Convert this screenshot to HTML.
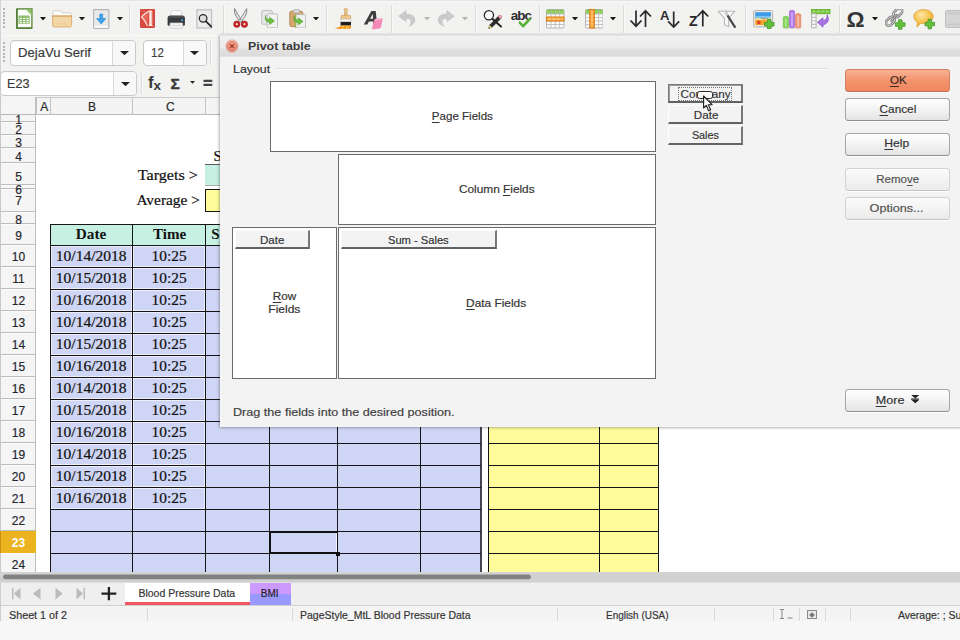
<!DOCTYPE html><html><head><meta charset="utf-8"><title>Pivot table</title><style>
*{box-sizing:border-box;margin:0;padding:0}
html,body{width:960px;height:640px;overflow:hidden;background:#f2f2f1;font-family:"Liberation Sans",sans-serif;color:#333}
.abs{position:absolute}
#root{position:relative;width:960px;height:640px;overflow:hidden;background:#f2f2f1}
.hl{position:absolute;background:#151515;height:1px}
.vl{position:absolute;background:#151515;width:1px}
.btn{position:absolute;border:1px solid #a6a6a6;border-bottom-color:#8f8f8f;border-radius:3.500px;background:linear-gradient(#ffffff,#f4f4f4 45%,#e4e4e4);box-shadow:0 1px 0 rgba(255,255,255,.9)}
.fld{position:absolute;background:#f3f3f3;border-top:1px solid #fdfdfd;border-left:1px solid #fdfdfd;border-right:2px solid #777;border-bottom:2px solid #626262}
.box{position:absolute;background:#fff;border:1px solid #6a6a6a}
u{text-decoration:underline;text-underline-offset:1.500px;text-decoration-thickness:1px}
</style></head><body><div id="root">
<div class="abs" style="left:0;top:97px;width:960px;height:476px;background:#fff"></div>
<div class="abs" style="left:0;top:97px;width:960px;height:18px;background:#f4f4f4;border-top:1px solid #cacaca;border-bottom:1px solid #b9b9b9"></div>
<div class="abs" style="left:0;top:97px;width:36px;height:476px;background:#f5f5f5;border-right:1px solid #bdbdbd"></div>
<div class="abs" style="left:0;top:97px;width:1px;height:476px;background:#c8c8c8"></div>
<div class="abs" style="left:1px;top:114px;width:35px;height:1px;background:#b9b9b9"></div>
<div class="abs" style="left:40.20px;top:98.80px;height:16px;line-height:16px;font-size:12px;color:#2a2a2a;white-space:nowrap;transform-origin:50% 50%;-webkit-text-stroke:0.18px #2a2a2a;">A</div>
<div class="abs" style="left:88.00px;top:98.80px;height:16px;line-height:16px;font-size:12px;color:#2a2a2a;white-space:nowrap;transform-origin:50% 50%;-webkit-text-stroke:0.18px #2a2a2a;">B</div>
<div class="abs" style="left:165.97px;top:98.80px;height:16px;line-height:16px;font-size:12px;color:#2a2a2a;white-space:nowrap;transform-origin:50% 50%;-webkit-text-stroke:0.18px #2a2a2a;">C</div>
<div class="abs" style="left:36px;top:98px;width:1px;height:17px;background:#c2c2c2"></div>
<div class="abs" style="left:50px;top:98px;width:1px;height:17px;background:#c2c2c2"></div>
<div class="abs" style="left:132px;top:98px;width:1px;height:17px;background:#c2c2c2"></div>
<div class="abs" style="left:205px;top:98px;width:1px;height:17px;background:#c2c2c2"></div>
<div class="abs" style="left:1px;top:121px;width:35px;height:1px;background:#bcbcbc"></div><div class="abs" style="left:1px;top:122px;width:34px;height:1px;background:#fbfbfb"></div>
<div class="abs" style="left:1px;top:134px;width:35px;height:1px;background:#bcbcbc"></div><div class="abs" style="left:1px;top:135px;width:34px;height:1px;background:#fbfbfb"></div>
<div class="abs" style="left:1px;top:147px;width:35px;height:1px;background:#bcbcbc"></div><div class="abs" style="left:1px;top:148px;width:34px;height:1px;background:#fbfbfb"></div>
<div class="abs" style="left:1px;top:162px;width:35px;height:1px;background:#bcbcbc"></div><div class="abs" style="left:1px;top:163px;width:34px;height:1px;background:#fbfbfb"></div>
<div class="abs" style="left:1px;top:184px;width:35px;height:1px;background:#bcbcbc"></div><div class="abs" style="left:1px;top:185px;width:34px;height:1px;background:#fbfbfb"></div>
<div class="abs" style="left:1px;top:188px;width:35px;height:1px;background:#bcbcbc"></div><div class="abs" style="left:1px;top:189px;width:34px;height:1px;background:#fbfbfb"></div>
<div class="abs" style="left:1px;top:211px;width:35px;height:1px;background:#bcbcbc"></div><div class="abs" style="left:1px;top:212px;width:34px;height:1px;background:#fbfbfb"></div>
<div class="abs" style="left:1px;top:223px;width:35px;height:1px;background:#bcbcbc"></div><div class="abs" style="left:1px;top:224px;width:34px;height:1px;background:#fbfbfb"></div>
<div class="abs" style="left:1px;top:244px;width:35px;height:1px;background:#bcbcbc"></div><div class="abs" style="left:1px;top:245px;width:34px;height:1px;background:#fbfbfb"></div>
<div class="abs" style="left:1px;top:266px;width:35px;height:1px;background:#bcbcbc"></div><div class="abs" style="left:1px;top:267px;width:34px;height:1px;background:#fbfbfb"></div>
<div class="abs" style="left:1px;top:288px;width:35px;height:1px;background:#bcbcbc"></div><div class="abs" style="left:1px;top:289px;width:34px;height:1px;background:#fbfbfb"></div>
<div class="abs" style="left:1px;top:310px;width:35px;height:1px;background:#bcbcbc"></div><div class="abs" style="left:1px;top:311px;width:34px;height:1px;background:#fbfbfb"></div>
<div class="abs" style="left:1px;top:332px;width:35px;height:1px;background:#bcbcbc"></div><div class="abs" style="left:1px;top:333px;width:34px;height:1px;background:#fbfbfb"></div>
<div class="abs" style="left:1px;top:354px;width:35px;height:1px;background:#bcbcbc"></div><div class="abs" style="left:1px;top:355px;width:34px;height:1px;background:#fbfbfb"></div>
<div class="abs" style="left:1px;top:376px;width:35px;height:1px;background:#bcbcbc"></div><div class="abs" style="left:1px;top:377px;width:34px;height:1px;background:#fbfbfb"></div>
<div class="abs" style="left:1px;top:398px;width:35px;height:1px;background:#bcbcbc"></div><div class="abs" style="left:1px;top:399px;width:34px;height:1px;background:#fbfbfb"></div>
<div class="abs" style="left:1px;top:420px;width:35px;height:1px;background:#bcbcbc"></div><div class="abs" style="left:1px;top:421px;width:34px;height:1px;background:#fbfbfb"></div>
<div class="abs" style="left:1px;top:442px;width:35px;height:1px;background:#bcbcbc"></div><div class="abs" style="left:1px;top:443px;width:34px;height:1px;background:#fbfbfb"></div>
<div class="abs" style="left:1px;top:464px;width:35px;height:1px;background:#bcbcbc"></div><div class="abs" style="left:1px;top:465px;width:34px;height:1px;background:#fbfbfb"></div>
<div class="abs" style="left:1px;top:486px;width:35px;height:1px;background:#bcbcbc"></div><div class="abs" style="left:1px;top:487px;width:34px;height:1px;background:#fbfbfb"></div>
<div class="abs" style="left:1px;top:508px;width:35px;height:1px;background:#bcbcbc"></div><div class="abs" style="left:1px;top:509px;width:34px;height:1px;background:#fbfbfb"></div>
<div class="abs" style="left:1px;top:530px;width:35px;height:1px;background:#bcbcbc"></div><div class="abs" style="left:1px;top:531px;width:34px;height:1px;background:#fbfbfb"></div>
<div class="abs" style="left:1px;top:552px;width:35px;height:1px;background:#bcbcbc"></div><div class="abs" style="left:1px;top:553px;width:34px;height:1px;background:#fbfbfb"></div>
<div class="abs" style="left:1px;top:575px;width:35px;height:1px;background:#bcbcbc"></div><div class="abs" style="left:1px;top:576px;width:34px;height:1px;background:#fbfbfb"></div>
<div class="abs" style="left:15.16px;top:112.00px;height:16px;line-height:16px;font-size:12px;color:#25252f;white-space:nowrap;transform-origin:50% 50%;-webkit-text-stroke:0.18px #25252f;">1</div>
<div class="abs" style="left:15.16px;top:122.00px;height:16px;line-height:16px;font-size:12px;color:#25252f;white-space:nowrap;transform-origin:50% 50%;-webkit-text-stroke:0.18px #25252f;">2</div>
<div class="abs" style="left:15.16px;top:135.00px;height:16px;line-height:16px;font-size:12px;color:#25252f;white-space:nowrap;transform-origin:50% 50%;-webkit-text-stroke:0.18px #25252f;">3</div>
<div class="abs" style="left:15.16px;top:148.50px;height:16px;line-height:16px;font-size:12px;color:#25252f;white-space:nowrap;transform-origin:50% 50%;-webkit-text-stroke:0.18px #25252f;">4</div>
<div class="abs" style="left:15.16px;top:168.50px;height:16px;line-height:16px;font-size:12px;color:#25252f;white-space:nowrap;transform-origin:50% 50%;-webkit-text-stroke:0.18px #25252f;">5</div>
<div class="abs" style="left:15.16px;top:182.00px;height:16px;line-height:16px;font-size:12px;color:#25252f;white-space:nowrap;transform-origin:50% 50%;-webkit-text-stroke:0.18px #25252f;">6</div>
<div class="abs" style="left:15.16px;top:193.00px;height:16px;line-height:16px;font-size:12px;color:#25252f;white-space:nowrap;transform-origin:50% 50%;-webkit-text-stroke:0.18px #25252f;">7</div>
<div class="abs" style="left:15.16px;top:211.50px;height:16px;line-height:16px;font-size:12px;color:#25252f;white-space:nowrap;transform-origin:50% 50%;-webkit-text-stroke:0.18px #25252f;">8</div>
<div class="abs" style="left:15.16px;top:227.50px;height:16px;line-height:16px;font-size:12px;color:#25252f;white-space:nowrap;transform-origin:50% 50%;-webkit-text-stroke:0.18px #25252f;">9</div>
<div class="abs" style="left:11.83px;top:249.30px;height:16px;line-height:16px;font-size:12px;color:#25252f;white-space:nowrap;transform-origin:50% 50%;-webkit-text-stroke:0.18px #25252f;">10</div>
<div class="abs" style="left:12.27px;top:271.30px;height:16px;line-height:16px;font-size:12px;color:#25252f;white-space:nowrap;transform-origin:50% 50%;-webkit-text-stroke:0.18px #25252f;">11</div>
<div class="abs" style="left:11.83px;top:293.30px;height:16px;line-height:16px;font-size:12px;color:#25252f;white-space:nowrap;transform-origin:50% 50%;-webkit-text-stroke:0.18px #25252f;">12</div>
<div class="abs" style="left:11.83px;top:315.30px;height:16px;line-height:16px;font-size:12px;color:#25252f;white-space:nowrap;transform-origin:50% 50%;-webkit-text-stroke:0.18px #25252f;">13</div>
<div class="abs" style="left:11.83px;top:337.30px;height:16px;line-height:16px;font-size:12px;color:#25252f;white-space:nowrap;transform-origin:50% 50%;-webkit-text-stroke:0.18px #25252f;">14</div>
<div class="abs" style="left:11.83px;top:359.30px;height:16px;line-height:16px;font-size:12px;color:#25252f;white-space:nowrap;transform-origin:50% 50%;-webkit-text-stroke:0.18px #25252f;">15</div>
<div class="abs" style="left:11.83px;top:381.30px;height:16px;line-height:16px;font-size:12px;color:#25252f;white-space:nowrap;transform-origin:50% 50%;-webkit-text-stroke:0.18px #25252f;">16</div>
<div class="abs" style="left:11.83px;top:403.30px;height:16px;line-height:16px;font-size:12px;color:#25252f;white-space:nowrap;transform-origin:50% 50%;-webkit-text-stroke:0.18px #25252f;">17</div>
<div class="abs" style="left:11.83px;top:425.30px;height:16px;line-height:16px;font-size:12px;color:#25252f;white-space:nowrap;transform-origin:50% 50%;-webkit-text-stroke:0.18px #25252f;">18</div>
<div class="abs" style="left:11.83px;top:447.30px;height:16px;line-height:16px;font-size:12px;color:#25252f;white-space:nowrap;transform-origin:50% 50%;-webkit-text-stroke:0.18px #25252f;">19</div>
<div class="abs" style="left:11.83px;top:469.30px;height:16px;line-height:16px;font-size:12px;color:#25252f;white-space:nowrap;transform-origin:50% 50%;-webkit-text-stroke:0.18px #25252f;">20</div>
<div class="abs" style="left:11.83px;top:491.30px;height:16px;line-height:16px;font-size:12px;color:#25252f;white-space:nowrap;transform-origin:50% 50%;-webkit-text-stroke:0.18px #25252f;">21</div>
<div class="abs" style="left:11.83px;top:513.30px;height:16px;line-height:16px;font-size:12px;color:#25252f;white-space:nowrap;transform-origin:50% 50%;-webkit-text-stroke:0.18px #25252f;">22</div>
<div class="abs" style="left:0;top:531px;width:36px;height:22px;background:#eab31f;border-left:1px solid #c99212"></div>
<div class="abs" style="left:11.83px;top:535.30px;height:16px;line-height:16px;font-size:12px;color:#fff;white-space:nowrap;transform-origin:50% 50%;font-weight:bold;">23</div>
<div class="abs" style="left:11.83px;top:557.30px;height:16px;line-height:16px;font-size:12px;color:#25252f;white-space:nowrap;transform-origin:50% 50%;-webkit-text-stroke:0.18px #25252f;">24</div>
<div class="abs" style="left:50px;top:245px;width:431px;height:328px;background:#cfd5f4"></div>
<div class="abs" style="left:50px;top:224px;width:431px;height:21px;background:#c6f0e1"></div>
<div class="abs" style="left:488px;top:245px;width:170px;height:328px;background:#fffd9b"></div>
<div class="abs" style="left:205px;top:164px;width:30px;height:22px;background:#c6f0e1;border-top:1px solid #5a5a5a;border-bottom:1px solid #b0b0b0"></div>
<div class="abs" style="left:205px;top:189px;width:30px;height:23px;background:#fffd9b;border:1px solid #151515"></div>
<div class="abs" style="left:213.50px;top:145.50px;height:20px;line-height:20px;font-size:15px;color:#111;white-space:nowrap;transform-origin:0 50%;font-family:'Liberation Serif',serif;-webkit-text-stroke:0.22px #111;">S</div>
<div class="abs" style="left:142.33px;top:165.00px;height:20px;line-height:20px;font-size:15px;color:#111;white-space:nowrap;transform-origin:100% 50%;transform:scaleX(1.0739);font-family:'Liberation Serif',serif;-webkit-text-stroke:0.22px #111;">Targets &gt;</div>
<div class="abs" style="left:138.10px;top:190.00px;height:20px;line-height:20px;font-size:15px;color:#111;white-space:nowrap;transform-origin:100% 50%;transform:scaleX(1.0259);font-family:'Liberation Serif',serif;-webkit-text-stroke:0.22px #111;">Average &gt;</div>
<div class="abs" style="left:51px;top:246px;width:81px;height:21px;border:1px solid rgba(255,255,255,.6)"></div>
<div class="abs" style="left:133px;top:246px;width:72px;height:21px;border:1px solid rgba(255,255,255,.6)"></div>
<div class="abs" style="left:51px;top:268px;width:81px;height:21px;border:1px solid rgba(255,255,255,.6)"></div>
<div class="abs" style="left:133px;top:268px;width:72px;height:21px;border:1px solid rgba(255,255,255,.6)"></div>
<div class="abs" style="left:51px;top:290px;width:81px;height:21px;border:1px solid rgba(255,255,255,.6)"></div>
<div class="abs" style="left:133px;top:290px;width:72px;height:21px;border:1px solid rgba(255,255,255,.6)"></div>
<div class="abs" style="left:51px;top:312px;width:81px;height:21px;border:1px solid rgba(255,255,255,.6)"></div>
<div class="abs" style="left:133px;top:312px;width:72px;height:21px;border:1px solid rgba(255,255,255,.6)"></div>
<div class="abs" style="left:51px;top:334px;width:81px;height:21px;border:1px solid rgba(255,255,255,.6)"></div>
<div class="abs" style="left:133px;top:334px;width:72px;height:21px;border:1px solid rgba(255,255,255,.6)"></div>
<div class="abs" style="left:51px;top:356px;width:81px;height:21px;border:1px solid rgba(255,255,255,.6)"></div>
<div class="abs" style="left:133px;top:356px;width:72px;height:21px;border:1px solid rgba(255,255,255,.6)"></div>
<div class="abs" style="left:51px;top:378px;width:81px;height:21px;border:1px solid rgba(255,255,255,.6)"></div>
<div class="abs" style="left:133px;top:378px;width:72px;height:21px;border:1px solid rgba(255,255,255,.6)"></div>
<div class="abs" style="left:51px;top:400px;width:81px;height:21px;border:1px solid rgba(255,255,255,.6)"></div>
<div class="abs" style="left:133px;top:400px;width:72px;height:21px;border:1px solid rgba(255,255,255,.6)"></div>
<div class="abs" style="left:51px;top:422px;width:81px;height:21px;border:1px solid rgba(255,255,255,.6)"></div>
<div class="abs" style="left:133px;top:422px;width:72px;height:21px;border:1px solid rgba(255,255,255,.6)"></div>
<div class="abs" style="left:51px;top:444px;width:81px;height:21px;border:1px solid rgba(255,255,255,.6)"></div>
<div class="abs" style="left:133px;top:444px;width:72px;height:21px;border:1px solid rgba(255,255,255,.6)"></div>
<div class="abs" style="left:51px;top:466px;width:81px;height:21px;border:1px solid rgba(255,255,255,.6)"></div>
<div class="abs" style="left:133px;top:466px;width:72px;height:21px;border:1px solid rgba(255,255,255,.6)"></div>
<div class="abs" style="left:51px;top:488px;width:81px;height:21px;border:1px solid rgba(255,255,255,.6)"></div>
<div class="abs" style="left:133px;top:488px;width:72px;height:21px;border:1px solid rgba(255,255,255,.6)"></div>
<div class="abs" style="left:480px;top:224px;width:2px;height:349px;background:#444450"></div>
<div class="vl" style="left:50px;top:224px;height:349px"></div>
<div class="vl" style="left:132px;top:224px;height:349px"></div>
<div class="vl" style="left:205px;top:224px;height:349px"></div>
<div class="vl" style="left:269px;top:224px;height:349px"></div>
<div class="vl" style="left:337px;top:224px;height:349px"></div>
<div class="vl" style="left:420px;top:224px;height:349px"></div>
<div class="vl" style="left:488px;top:245px;height:328px"></div>
<div class="vl" style="left:599px;top:245px;height:328px"></div>
<div class="vl" style="left:658px;top:245px;height:328px"></div>
<div class="hl" style="left:50px;top:224px;width:431px"></div>
<div class="hl" style="left:50px;top:245px;width:431px"></div>
<div class="hl" style="left:488px;top:245px;width:171px"></div>
<div class="hl" style="left:50px;top:267px;width:431px"></div>
<div class="hl" style="left:488px;top:267px;width:171px"></div>
<div class="hl" style="left:50px;top:289px;width:431px"></div>
<div class="hl" style="left:488px;top:289px;width:171px"></div>
<div class="hl" style="left:50px;top:311px;width:431px"></div>
<div class="hl" style="left:488px;top:311px;width:171px"></div>
<div class="hl" style="left:50px;top:333px;width:431px"></div>
<div class="hl" style="left:488px;top:333px;width:171px"></div>
<div class="hl" style="left:50px;top:355px;width:431px"></div>
<div class="hl" style="left:488px;top:355px;width:171px"></div>
<div class="hl" style="left:50px;top:377px;width:431px"></div>
<div class="hl" style="left:488px;top:377px;width:171px"></div>
<div class="hl" style="left:50px;top:399px;width:431px"></div>
<div class="hl" style="left:488px;top:399px;width:171px"></div>
<div class="hl" style="left:50px;top:421px;width:431px"></div>
<div class="hl" style="left:488px;top:421px;width:171px"></div>
<div class="hl" style="left:50px;top:443px;width:431px"></div>
<div class="hl" style="left:488px;top:443px;width:171px"></div>
<div class="hl" style="left:50px;top:465px;width:431px"></div>
<div class="hl" style="left:488px;top:465px;width:171px"></div>
<div class="hl" style="left:50px;top:487px;width:431px"></div>
<div class="hl" style="left:488px;top:487px;width:171px"></div>
<div class="hl" style="left:50px;top:509px;width:431px"></div>
<div class="hl" style="left:488px;top:509px;width:171px"></div>
<div class="hl" style="left:50px;top:531px;width:431px"></div>
<div class="hl" style="left:488px;top:531px;width:171px"></div>
<div class="hl" style="left:50px;top:553px;width:431px"></div>
<div class="hl" style="left:488px;top:553px;width:171px"></div>
<div class="abs" style="left:76.01px;top:224.20px;height:20px;line-height:20px;font-size:15px;color:#111;white-space:nowrap;transform-origin:50% 50%;transform:scaleX(1.0172);font-family:'Liberation Serif',serif;font-weight:bold;">Date</div>
<div class="abs" style="left:152.97px;top:224.20px;height:20px;line-height:20px;font-size:15px;color:#111;white-space:nowrap;transform-origin:50% 50%;transform:scaleX(1.0044);font-family:'Liberation Serif',serif;font-weight:bold;">Time</div>
<div class="abs" style="left:211.30px;top:224.20px;height:20px;line-height:20px;font-size:15px;color:#111;white-space:nowrap;transform-origin:0 50%;font-family:'Liberation Serif',serif;font-weight:bold;">S</div>
<div class="abs" style="left:56.83px;top:246.10px;height:20px;line-height:20px;font-size:15px;color:#111;white-space:nowrap;transform-origin:50% 50%;transform:scaleX(1.0346);font-family:'Liberation Serif',serif;-webkit-text-stroke:0.22px #111;">10/14/2018</div>
<div class="abs" style="left:152.42px;top:246.10px;height:20px;line-height:20px;font-size:15px;color:#111;white-space:nowrap;transform-origin:50% 50%;transform:scaleX(1.0244);font-family:'Liberation Serif',serif;-webkit-text-stroke:0.22px #111;">10:25</div>
<div class="abs" style="left:56.83px;top:268.10px;height:20px;line-height:20px;font-size:15px;color:#111;white-space:nowrap;transform-origin:50% 50%;transform:scaleX(1.0346);font-family:'Liberation Serif',serif;-webkit-text-stroke:0.22px #111;">10/15/2018</div>
<div class="abs" style="left:152.42px;top:268.10px;height:20px;line-height:20px;font-size:15px;color:#111;white-space:nowrap;transform-origin:50% 50%;transform:scaleX(1.0244);font-family:'Liberation Serif',serif;-webkit-text-stroke:0.22px #111;">10:25</div>
<div class="abs" style="left:56.83px;top:290.10px;height:20px;line-height:20px;font-size:15px;color:#111;white-space:nowrap;transform-origin:50% 50%;transform:scaleX(1.0346);font-family:'Liberation Serif',serif;-webkit-text-stroke:0.22px #111;">10/16/2018</div>
<div class="abs" style="left:152.42px;top:290.10px;height:20px;line-height:20px;font-size:15px;color:#111;white-space:nowrap;transform-origin:50% 50%;transform:scaleX(1.0244);font-family:'Liberation Serif',serif;-webkit-text-stroke:0.22px #111;">10:25</div>
<div class="abs" style="left:56.83px;top:312.10px;height:20px;line-height:20px;font-size:15px;color:#111;white-space:nowrap;transform-origin:50% 50%;transform:scaleX(1.0346);font-family:'Liberation Serif',serif;-webkit-text-stroke:0.22px #111;">10/14/2018</div>
<div class="abs" style="left:152.42px;top:312.10px;height:20px;line-height:20px;font-size:15px;color:#111;white-space:nowrap;transform-origin:50% 50%;transform:scaleX(1.0244);font-family:'Liberation Serif',serif;-webkit-text-stroke:0.22px #111;">10:25</div>
<div class="abs" style="left:56.83px;top:334.10px;height:20px;line-height:20px;font-size:15px;color:#111;white-space:nowrap;transform-origin:50% 50%;transform:scaleX(1.0346);font-family:'Liberation Serif',serif;-webkit-text-stroke:0.22px #111;">10/15/2018</div>
<div class="abs" style="left:152.42px;top:334.10px;height:20px;line-height:20px;font-size:15px;color:#111;white-space:nowrap;transform-origin:50% 50%;transform:scaleX(1.0244);font-family:'Liberation Serif',serif;-webkit-text-stroke:0.22px #111;">10:25</div>
<div class="abs" style="left:56.83px;top:356.10px;height:20px;line-height:20px;font-size:15px;color:#111;white-space:nowrap;transform-origin:50% 50%;transform:scaleX(1.0346);font-family:'Liberation Serif',serif;-webkit-text-stroke:0.22px #111;">10/16/2018</div>
<div class="abs" style="left:152.42px;top:356.10px;height:20px;line-height:20px;font-size:15px;color:#111;white-space:nowrap;transform-origin:50% 50%;transform:scaleX(1.0244);font-family:'Liberation Serif',serif;-webkit-text-stroke:0.22px #111;">10:25</div>
<div class="abs" style="left:56.83px;top:378.10px;height:20px;line-height:20px;font-size:15px;color:#111;white-space:nowrap;transform-origin:50% 50%;transform:scaleX(1.0346);font-family:'Liberation Serif',serif;-webkit-text-stroke:0.22px #111;">10/14/2018</div>
<div class="abs" style="left:152.42px;top:378.10px;height:20px;line-height:20px;font-size:15px;color:#111;white-space:nowrap;transform-origin:50% 50%;transform:scaleX(1.0244);font-family:'Liberation Serif',serif;-webkit-text-stroke:0.22px #111;">10:25</div>
<div class="abs" style="left:56.83px;top:400.10px;height:20px;line-height:20px;font-size:15px;color:#111;white-space:nowrap;transform-origin:50% 50%;transform:scaleX(1.0346);font-family:'Liberation Serif',serif;-webkit-text-stroke:0.22px #111;">10/15/2018</div>
<div class="abs" style="left:152.42px;top:400.10px;height:20px;line-height:20px;font-size:15px;color:#111;white-space:nowrap;transform-origin:50% 50%;transform:scaleX(1.0244);font-family:'Liberation Serif',serif;-webkit-text-stroke:0.22px #111;">10:25</div>
<div class="abs" style="left:56.83px;top:422.10px;height:20px;line-height:20px;font-size:15px;color:#111;white-space:nowrap;transform-origin:50% 50%;transform:scaleX(1.0346);font-family:'Liberation Serif',serif;-webkit-text-stroke:0.22px #111;">10/16/2018</div>
<div class="abs" style="left:152.42px;top:422.10px;height:20px;line-height:20px;font-size:15px;color:#111;white-space:nowrap;transform-origin:50% 50%;transform:scaleX(1.0244);font-family:'Liberation Serif',serif;-webkit-text-stroke:0.22px #111;">10:25</div>
<div class="abs" style="left:56.83px;top:444.10px;height:20px;line-height:20px;font-size:15px;color:#111;white-space:nowrap;transform-origin:50% 50%;transform:scaleX(1.0346);font-family:'Liberation Serif',serif;-webkit-text-stroke:0.22px #111;">10/14/2018</div>
<div class="abs" style="left:152.42px;top:444.10px;height:20px;line-height:20px;font-size:15px;color:#111;white-space:nowrap;transform-origin:50% 50%;transform:scaleX(1.0244);font-family:'Liberation Serif',serif;-webkit-text-stroke:0.22px #111;">10:25</div>
<div class="abs" style="left:56.83px;top:466.10px;height:20px;line-height:20px;font-size:15px;color:#111;white-space:nowrap;transform-origin:50% 50%;transform:scaleX(1.0346);font-family:'Liberation Serif',serif;-webkit-text-stroke:0.22px #111;">10/15/2018</div>
<div class="abs" style="left:152.42px;top:466.10px;height:20px;line-height:20px;font-size:15px;color:#111;white-space:nowrap;transform-origin:50% 50%;transform:scaleX(1.0244);font-family:'Liberation Serif',serif;-webkit-text-stroke:0.22px #111;">10:25</div>
<div class="abs" style="left:56.83px;top:488.10px;height:20px;line-height:20px;font-size:15px;color:#111;white-space:nowrap;transform-origin:50% 50%;transform:scaleX(1.0346);font-family:'Liberation Serif',serif;-webkit-text-stroke:0.22px #111;">10/16/2018</div>
<div class="abs" style="left:152.42px;top:488.10px;height:20px;line-height:20px;font-size:15px;color:#111;white-space:nowrap;transform-origin:50% 50%;transform:scaleX(1.0244);font-family:'Liberation Serif',serif;-webkit-text-stroke:0.22px #111;">10:25</div>
<div class="abs" style="left:269px;top:531px;width:69px;height:23px;border:2px solid #111;border-right:1px solid #111;box-shadow:inset -1px 0 0 rgba(255,255,255,.85)"></div>
<div class="abs" style="left:335.500px;top:551.500px;width:4px;height:4px;background:#111"></div>
<div class="abs" style="left:0;top:572px;width:960px;height:11px;background:linear-gradient(#d3d3d3,#cfcfcf 85%,#e2e2e2)"></div>
<svg class="abs" style="left:0;top:572px" width="540" height="10" viewBox="0 0 540 10"><rect x="3" y="2.500" width="528" height="4.800" rx="2.400" fill="#828282"/></svg>
<div class="abs" style="left:0;top:583px;width:960px;height:22px;background:#efefef"></div>
<div class="abs" style="left:125px;top:583px;width:125px;height:22px;background:#fff;border-bottom:3px solid #f0565f"></div>
<div class="abs" style="left:136.87px;top:586.00px;height:14px;line-height:14px;font-size:10.8px;color:#333;white-space:nowrap;transform-origin:50% 50%;transform:scaleX(0.9704);-webkit-text-stroke:0.18px #333;">Blood Pressure Data</div>
<div class="abs" style="left:250px;top:583px;width:41px;height:22px;background:linear-gradient(#cc99ff 0,#cc99ff 50%,#9999ff 50%,#9999ff 100%)"></div>
<div class="abs" style="left:260.40px;top:585.80px;height:14px;line-height:14px;font-size:10.8px;color:#222;white-space:nowrap;transform-origin:50% 50%;transform:scaleX(0.9270);-webkit-text-stroke:0.18px #222;">BMI</div>
<svg class="abs" style="left:8px;top:584px" width="110" height="20" viewBox="0 0 110 20"><g fill="#bcbcbc"><rect x="4" y="3.800" width="1.500" height="11.600"/><path d="M12.500 3.800v11.600L5.800 9.600z"/><path d="M32.500 3.800v11.600L24.800 9.600z"/><path d="M47.500 3.800v11.600l7.200-5.800z"/><path d="M68.500 3.800v11.600l6.500-5.800z"/><rect x="75.500" y="3.800" width="1.500" height="11.600"/></g><path d="M100.900 2.900v13.400M93.500 9.600h14.800" stroke="#222" stroke-width="2.300" fill="none"/></svg>
<div class="abs" style="left:0;top:605px;width:960px;height:16px;background:#f4f4f4;border-top:1px solid #cfcfcf"></div>
<div class="abs" style="left:0;top:621px;width:960px;height:19px;background:#f7f7f7"></div><div class="abs" style="left:0;top:583px;width:1px;height:38px;background:#cfcfcf"></div>
<div class="abs" style="left:147px;top:608px;width:1px;height:13px;background:#dadada"></div>
<div class="abs" style="left:292px;top:608px;width:1px;height:13px;background:#dadada"></div>
<div class="abs" style="left:557px;top:608px;width:1px;height:13px;background:#dadada"></div>
<div class="abs" style="left:714px;top:608px;width:1px;height:13px;background:#dadada"></div>
<div class="abs" style="left:773px;top:608px;width:1px;height:13px;background:#dadada"></div>
<div class="abs" style="left:799px;top:608px;width:1px;height:13px;background:#dadada"></div>
<div class="abs" style="left:825px;top:608px;width:1px;height:13px;background:#dadada"></div>
<div class="abs" style="left:850px;top:608px;width:1px;height:13px;background:#dadada"></div>
<div class="abs" style="left:8.70px;top:608.00px;height:14px;line-height:14px;font-size:10.8px;color:#333;white-space:nowrap;transform-origin:0 50%;transform:scaleX(0.9958);-webkit-text-stroke:0.18px #333;">Sheet 1 of 2</div>
<div class="abs" style="left:299.70px;top:608.00px;height:14px;line-height:14px;font-size:10.8px;color:#333;white-space:nowrap;transform-origin:0 50%;transform:scaleX(0.9721);-webkit-text-stroke:0.18px #333;">PageStyle_MtL Blood Pressure Data</div>
<div class="abs" style="left:606.00px;top:608.00px;height:14px;line-height:14px;font-size:10.8px;color:#333;white-space:nowrap;transform-origin:0 50%;transform:scaleX(0.9215);-webkit-text-stroke:0.18px #333;">English (USA)</div>
<div class="abs" style="left:898.00px;top:608.00px;height:14px;line-height:14px;font-size:10.8px;color:#333;white-space:nowrap;transform-origin:0 50%;transform:scaleX(0.9698);-webkit-text-stroke:0.18px #333;">Average: ; Sum</div>
<svg class="abs" style="left:779px;top:609px" width="16" height="11" viewBox="0 0 16 11"><path d="M1 .5h4M3 .5v9M1 9.500h4M8.500 9h5" stroke="#888" stroke-width="1" fill="none"/></svg>
<div class="abs" style="left:807px;top:610px;width:10px;height:9px;border:1px solid #8a8a8a;background:#e9e9e9"></div>
<div class="abs" style="left:810px;top:612.500px;width:4px;height:4px;background:#777;transform:rotate(45deg)"></div>
<div class="abs" style="left:0;top:0;width:960px;height:97px;background:#f2f2f1"></div>
<div class="abs" style="left:0;top:0;width:960px;height:1px;background:#e4e4e4"></div>
<div class="abs" style="left:0;top:1px;width:960px;height:1px;background:#f8f8f8"></div>
<div class="abs" style="left:0;top:35px;width:960px;height:1px;background:#f9f9f9"></div>
<div class="abs" style="left:0;top:0;width:1px;height:97px;background:#d5d5d5"></div>
<div class="abs" style="left:3px;top:8.0px;width:2px;height:2px;background:#b4b4b4"></div>
<div class="abs" style="left:3px;top:11.6px;width:2px;height:2px;background:#b4b4b4"></div>
<div class="abs" style="left:3px;top:15.2px;width:2px;height:2px;background:#b4b4b4"></div>
<div class="abs" style="left:3px;top:18.8px;width:2px;height:2px;background:#b4b4b4"></div>
<div class="abs" style="left:3px;top:22.4px;width:2px;height:2px;background:#b4b4b4"></div>
<div class="abs" style="left:3px;top:26.0px;width:2px;height:2px;background:#b4b4b4"></div>
<div class="abs" style="left:3px;top:42.0px;width:2px;height:2px;background:#b4b4b4"></div>
<div class="abs" style="left:3px;top:45.6px;width:2px;height:2px;background:#b4b4b4"></div>
<div class="abs" style="left:3px;top:49.2px;width:2px;height:2px;background:#b4b4b4"></div>
<div class="abs" style="left:3px;top:52.8px;width:2px;height:2px;background:#b4b4b4"></div>
<div class="abs" style="left:3px;top:56.4px;width:2px;height:2px;background:#b4b4b4"></div>
<div class="abs" style="left:3px;top:60.0px;width:2px;height:2px;background:#b4b4b4"></div>
<div class="abs" style="left:129px;top:5px;width:1px;height:28px;background:#dcdcdc"></div>
<div class="abs" style="left:130px;top:5px;width:1px;height:28px;background:#fafafa"></div>
<div class="abs" style="left:223px;top:5px;width:1px;height:28px;background:#dcdcdc"></div>
<div class="abs" style="left:224px;top:5px;width:1px;height:28px;background:#fafafa"></div>
<div class="abs" style="left:326px;top:5px;width:1px;height:28px;background:#dcdcdc"></div>
<div class="abs" style="left:327px;top:5px;width:1px;height:28px;background:#fafafa"></div>
<div class="abs" style="left:391px;top:5px;width:1px;height:28px;background:#dcdcdc"></div>
<div class="abs" style="left:392px;top:5px;width:1px;height:28px;background:#fafafa"></div>
<div class="abs" style="left:475px;top:5px;width:1px;height:28px;background:#dcdcdc"></div>
<div class="abs" style="left:476px;top:5px;width:1px;height:28px;background:#fafafa"></div>
<div class="abs" style="left:539px;top:5px;width:1px;height:28px;background:#dcdcdc"></div>
<div class="abs" style="left:540px;top:5px;width:1px;height:28px;background:#fafafa"></div>
<div class="abs" style="left:623px;top:5px;width:1px;height:28px;background:#dcdcdc"></div>
<div class="abs" style="left:624px;top:5px;width:1px;height:28px;background:#fafafa"></div>
<div class="abs" style="left:745px;top:5px;width:1px;height:28px;background:#dcdcdc"></div>
<div class="abs" style="left:746px;top:5px;width:1px;height:28px;background:#fafafa"></div>
<div class="abs" style="left:839px;top:5px;width:1px;height:28px;background:#dcdcdc"></div>
<div class="abs" style="left:840px;top:5px;width:1px;height:28px;background:#fafafa"></div>
<svg class="abs" style="left:40.0px;top:16.7px" width="6" height="3.6" viewBox="0 0 6 3.6"><path d="M0 0h6L3.0 3.6z" fill="#1a1a1a"/></svg>
<svg class="abs" style="left:78.5px;top:16.7px" width="6" height="3.6" viewBox="0 0 6 3.6"><path d="M0 0h6L3.0 3.6z" fill="#1a1a1a"/></svg>
<svg class="abs" style="left:116.8px;top:16.7px" width="6" height="3.6" viewBox="0 0 6 3.6"><path d="M0 0h6L3.0 3.6z" fill="#1a1a1a"/></svg>
<svg class="abs" style="left:313.2px;top:16.7px" width="6" height="3.6" viewBox="0 0 6 3.6"><path d="M0 0h6L3.0 3.6z" fill="#1a1a1a"/></svg>
<svg class="abs" style="left:572.0px;top:16.7px" width="6" height="3.6" viewBox="0 0 6 3.6"><path d="M0 0h6L3.0 3.6z" fill="#1a1a1a"/></svg>
<svg class="abs" style="left:610.3px;top:16.7px" width="6" height="3.6" viewBox="0 0 6 3.6"><path d="M0 0h6L3.0 3.6z" fill="#1a1a1a"/></svg>
<svg class="abs" style="left:871.5px;top:16.7px" width="6" height="3.6" viewBox="0 0 6 3.6"><path d="M0 0h6L3.0 3.6z" fill="#1a1a1a"/></svg>
<svg class="abs" style="left:423.5px;top:16.7px" width="6" height="3.6" viewBox="0 0 6 3.6"><path d="M0 0h6L3.0 3.6z" fill="#b5b5b5"/></svg>
<svg class="abs" style="left:461.8px;top:16.7px" width="6" height="3.6" viewBox="0 0 6 3.6"><path d="M0 0h6L3.0 3.6z" fill="#b5b5b5"/></svg>
<svg class="abs" style="left:15.5px;top:7.5px" width="17" height="21" viewBox="0 0 17 21"><rect x=".9" y=".9" width="15" height="19.200" fill="#fdfdfd" stroke="#5a8a3a" stroke-width="1.400"/><path d="M.9 .9v19.200h15" stroke="#4f7733" stroke-width="1.400" fill="none"/><path d="M10 1.600h5.600v5.600z" fill="#8cc068"/><path d="M10 1.600l5.600 5.600" stroke="#b9dba1" stroke-width=".8"/><rect x="2.600" y="7.600" width="11" height="8.200" fill="#78ad54"/><g fill="#f4faef"><rect x="3.500" y="9.700" width="2.500" height="1.500"/><rect x="6.900" y="9.700" width="2.500" height="1.500"/><rect x="10.300" y="9.700" width="2.500" height="1.500"/><rect x="3.500" y="11.900" width="2.500" height="1.500"/><rect x="6.900" y="11.900" width="2.500" height="1.500"/><rect x="10.300" y="11.900" width="2.500" height="1.500"/><rect x="3.500" y="14" width="2.500" height="1.300"/><rect x="6.900" y="14" width="2.500" height="1.300"/><rect x="10.300" y="14" width="2.500" height="1.300"/></g><path d="M3.500 8.600h9.300" stroke="#9fcd80" stroke-width=".9" stroke-dasharray="2.500 .9"/></svg>
<svg class="abs" style="left:52px;top:10px" width="20.5" height="18" viewBox="0 0 20.5 18"><path d="M.7 3q0-2.300 2-2.300h4.800q1.200 0 1.700 1t1.700 1h6.800q1.800 0 1.800 1.800V9H.7z" fill="#fcfcfc" stroke="#cfcac2" stroke-width=".9"/><path d="M.6 5.900h19v9.400q0 1.700-1.700 1.700H2.300q-1.700 0-1.700-1.700z" fill="#f5d6a5" stroke="#dcaa6c" stroke-width=".9"/><path d="M.6 6.100h19" stroke="#d99f5e" stroke-width="1"/><path d="M4 7.500v2.300M5.500 7.500v2.300M7 7.500v2.300M8.500 7.500v2.300M10 7.500v2.300M11.500 7.500v2.300M13 7.500v2.300M14.500 7.500v2.300M16 7.500v2.300" stroke="#e9dcae" stroke-width=".7"/><path d="M4.500 14h12" stroke="#ddb077" stroke-width=".9" stroke-dasharray=".9 1.600"/><path d="M7 11h7" stroke="#ecdcb4" stroke-width=".9" stroke-dasharray=".9 2"/></svg>
<svg class="abs" style="left:92.5px;top:9px" width="17" height="20" viewBox="0 0 17 20"><rect x=".6" y=".6" width="15.300" height="18.800" rx=".8" fill="#e5e5e5" stroke="#b3b3b3" stroke-width="1.100"/><rect x="1.600" y="1.600" width="13.300" height="14.900" fill="#e9e9e9"/><rect x="1.400" y="16.700" width="13.700" height="2.200" fill="#fbfbfb"/><path d="M6.800 5h2.900v4.600h3.200L8.250 15 3.500 9.600h3.300z" fill="#3fa3ea" stroke="#2f8ad2" stroke-width=".6"/></svg>
<svg class="abs" style="left:139.5px;top:8.8px" width="15" height="19" viewBox="0 0 15 19"><rect x=".5" y=".3" width="14" height="18.200" rx=".6" fill="#dc4a3e"/><rect x=".5" y=".3" width="14" height="18.200" rx=".6" fill="none" stroke="#c6342a" stroke-width=".8"/><path d="M8.900 2.300Q3.500 5.500 1.700 8Q4.800 11 7.300 16.600" fill="#e7685d" stroke="#fbe9e6" stroke-width="1.150" stroke-linecap="round"/><path d="M9.300 1.600h2.500v13.900l1 1v.6H8.600v-.6l.7-1z" fill="#fbf0ee"/><path d="M12.300 2v13" stroke="#ea8379" stroke-width=".8"/><path d="M2.300 2.300h4" stroke="#ef8d83" stroke-width="1" stroke-dasharray="1 .8"/></svg>
<svg class="abs" style="left:166.5px;top:9.5px" width="19" height="19" viewBox="0 0 19 19"><rect x="4" y=".6" width="10.400" height="7" rx=".8" fill="#fbfbfb" stroke="#cfcfcf" stroke-width=".8"/><path d="M.6 8.300q0-2.800 2.800-2.800h11.700q2.800 0 2.800 2.800v5.900q0 1.600-1.600 1.600H2.200q-1.600 0-1.600-1.600z" fill="#38393b"/><path d="M1.200 7.800q.3-1.800 2.400-1.800h11.300q2.100 0 2.400 1.800z" fill="#4f5153"/><rect x="3" y="13" width="12.600" height="5.300" rx=".5" fill="#f6f6f6" stroke="#cacaca" stroke-width=".8"/><rect x="4.600" y="14.800" width="9.400" height="1.500" fill="#dcdcdc"/><rect x="14.200" y="9.300" width="1.900" height="1.900" rx=".4" fill="#3aa7f4"/></svg>
<svg class="abs" style="left:196px;top:9px" width="17" height="20" viewBox="0 0 17 20"><rect x=".9" y=".8" width="14.700" height="18.200" fill="#e9e9e9" stroke="#bcbcbc" stroke-width="1.100"/><rect x="2.200" y="2.100" width="12.100" height="15.600" fill="#ededed"/><circle cx="7.100" cy="9.300" r="3.800" fill="#dfdfdf" stroke="#2a2a2a" stroke-width="1.250"/><path d="M10 12.300l5.300 5.300" stroke="#2a2a2a" stroke-width="1.900" stroke-linecap="round"/></svg>
<svg class="abs" style="left:232px;top:8px" width="17" height="20" viewBox="0 0 17 20"><path d="M2.600 .6q-.9 3.500 1.300 7.500T9.700 15l1-2.200Q7 8.500 5.200 5.200 3.600 2.300 2.600 .6z" fill="#dedede" stroke="#7c7c7c" stroke-width=".9" stroke-linejoin="round"/><path d="M14.600 .6q.9 3.500-1.300 7.500T7.500 15l-1-2.200Q10.200 8.500 12 5.200 13.600 2.300 14.600 .6z" fill="#eaeaea" stroke="#7c7c7c" stroke-width=".9" stroke-linejoin="round"/><circle cx="4.800" cy="16.200" r="3.200" fill="#c72323" stroke="#a81a1a" stroke-width=".6"/><circle cx="12.400" cy="16.200" r="3.200" fill="#c72323" stroke="#a81a1a" stroke-width=".6"/><circle cx="4.800" cy="16.200" r="1.100" fill="#f6e4e4"/><circle cx="12.400" cy="16.200" r="1.100" fill="#f6e4e4"/><circle cx="8.600" cy="11.600" r=".7" fill="#777"/></svg>
<svg class="abs" style="left:260.5px;top:9.5px" width="17.5" height="18.5" viewBox="0 0 17.5 18.5"><rect x=".8" y=".6" width="10.400" height="13.600" rx="1" fill="#e9e9e9" stroke="#b7b7b7" stroke-width=".9"/><rect x="6.200" y="3.800" width="10.400" height="14" rx="1" fill="#f1f1f1" stroke="#b7b7b7" stroke-width=".9"/><path d="M4.600 5.300Q4 9.500 8.600 9.600V7.300l4.800 3.600-4.800 3.600v-2.200Q2.800 12.200 4.600 5.300z" fill="#6bc043" stroke="#4e9d2f" stroke-width=".6" stroke-linejoin="round"/></svg>
<svg class="abs" style="left:288.5px;top:8.5px" width="17.5" height="19.5" viewBox="0 0 17.5 19.5"><rect x=".8" y="2.200" width="13" height="15.300" rx="1.600" fill="#d3a76e" stroke="#b28650" stroke-width=".9"/><rect x="4.600" y=".6" width="6" height="3.400" rx="1.100" fill="#dcdcdc" stroke="#9d9d9d" stroke-width=".7"/><rect x="6.700" y="5.600" width="10" height="13.300" rx=".8" fill="#f0f0f0" stroke="#b7b7b7" stroke-width=".9"/><path d="M6.700 5.600v13.300" stroke="#93ad3f" stroke-width="1"/><path d="M5.200 6.800Q4.600 11 9.200 11.100V8.800l4.800 3.600-4.800 3.600v-2.200Q3.400 13.700 5.200 6.800z" fill="#6bc043" stroke="#4e9d2f" stroke-width=".6" stroke-linejoin="round"/></svg>
<svg class="abs" style="left:334px;top:7.5px" width="19" height="22" viewBox="0 0 19 22"><path d="M10.300 2.300a1.600 1.600 0 1 1 3 0q-.5 1.300-.4 2.600l.3 3h-2.800l.3-3q.1-1.300-.4-2.600z" fill="#ecc58a" stroke="#c99a55" stroke-width=".7"/><path d="M7 8.200q0-.9.900-.9h7.800q.9 0 .9.900v3.200H7z" fill="#eec78d" stroke="#c99a55" stroke-width=".6"/><rect x="6.600" y="11.200" width="10.400" height="2.700" fill="#fafafa" stroke="#c4c4c4" stroke-width=".5"/><rect x="6.600" y="13.900" width="10.400" height="3.700" fill="#1e1e1e"/><path d="M.6 20.300q3.500-.6 5.200-1.500l.8-1.200h10.400q.6 2.800-.9 3.300-1.300.3-1.800-.9l-.8 1.400-1.200-1.200-1 1.300-1.500-1.100Q7 21.400.6 20.300z" fill="#f49b1c"/><path d="M8 18.500h2M12 19h2.500" stroke="#fbd36a" stroke-width=".9"/></svg>
<svg class="abs" style="left:363px;top:10px" width="20" height="20" viewBox="0 0 20 20"><path d="M.8 14.600L8.400 1h4.300l1.400 13.600h-3.500l-.3-3H5.900l-1.500 3zM7.200 8.700h2.900L9.600 3.800z" fill="#3d3d3d"/><path d="M12.300 9.300l6-1q1.200-.2 1 1l-1.600 7.600q-.2 1-1.200 1.200l-6 1q-1.300.2-1-1l1.800-7.600q.2-1 1-1.200z" fill="#f58ab8" stroke="#ee70a5" stroke-width=".5"/><path d="M12.300 9.300l6-1q1-.1 1 .6l-1 .4-5.800 1-.9.900q.1-1.700.7-1.900z" fill="#fbcadf"/></svg>
<svg class="abs" style="left:398px;top:9.5px" width="18" height="17" viewBox="0 0 18 17"><path d="M8 .8L.8 6.200 8 11.500V8.300q5.500-.3 5 4.200-.3 2-2 3.700 6.500-2.500 5.800-7.200Q16 4.300 8 4z" fill="#cacaca" stroke="#bbb" stroke-width=".6"/></svg>
<svg class="abs" style="left:437px;top:9.5px" width="18" height="17" viewBox="0 0 18 17"><path d="M10 .8l7.200 5.400L10 11.500V8.300Q4.500 8 5 12.500q.3 2 2 3.700Q.5 13.700 1.200 9 2 4.300 10 4z" fill="#cacaca" stroke="#bbb" stroke-width=".6"/></svg>
<svg class="abs" style="left:482.5px;top:9px" width="21" height="21" viewBox="0 0 21 21"><circle cx="5.900" cy="6.300" r="4.600" fill="#fbfbfb" stroke="#262626" stroke-width="1.300"/><path d="M9.300 9.800l8.700 7.700" stroke="#262626" stroke-width="2" stroke-linecap="round"/><path d="M16.300 6.300l2.400 2.400L9 18.300l-3.300 1 1-3.300z" fill="#2b2b2b" stroke="#151515" stroke-width=".5"/><path d="M15 7.700l2.300 2.300 1.900-1.900q.5-.6 0-1.200l-1-1q-.6-.5-1.200 0z" fill="#f3a3b8"/><path d="M5.600 19.400l1-3.400 2.400 2.400z" fill="#f2e274"/><path d="M5.600 19.400l.4-1.300.9.900z" fill="#333"/></svg>
<div class="abs" style="left:509.500px;top:7.500px;width:23px;text-align:center;font-size:13.500px;font-weight:bold;color:#2d2d2d;letter-spacing:-1px;line-height:15px">abc</div>
<svg class="abs" style="left:517.5px;top:18px" width="14" height="11" viewBox="0 0 14 11"><path d="M1.800 4.600l3.300 3.600L11.500 1.400" stroke="#55b135" stroke-width="2.600" fill="none" stroke-linecap="round" stroke-linejoin="round"/></svg>
<svg class="abs" style="left:546px;top:9px" width="18.5" height="19.5" viewBox="0 0 18.5 19.5"><rect x=".5" y=".5" width="17.500" height="18.500" rx="1.200" fill="#fbfbfb" stroke="#b2b2b2" stroke-width="1"/><rect x=".8" y=".8" width="16.900" height="4" fill="#78c540"/><path d="M1 2.800h16.500" stroke="#9ddb69" stroke-width="1.500" stroke-dasharray="2.800 1.600" /><path d="M.5 5h17.500M.5 8.500h17.500M.5 12h17.500M.5 15.500h17.500M5 .8v18M9.300 .8v18M13.600 .8v18" stroke="#bcbcbc" stroke-width=".9"/><rect x=".5" y="8" width="17.500" height="4" fill="#f5a742" stroke="#e07c12" stroke-width="1"/><path d="M2 10h15" stroke="#fbd28f" stroke-width="1.400" stroke-dasharray="2.800 1.600"/></svg>
<svg class="abs" style="left:584.5px;top:9px" width="18.5" height="19.5" viewBox="0 0 18.5 19.5"><rect x=".5" y=".5" width="17.500" height="18.500" rx="1.200" fill="#fbfbfb" stroke="#b2b2b2" stroke-width="1"/><rect x=".8" y=".8" width="16.900" height="4" fill="#78c540"/><path d="M1 2.800h16.500" stroke="#9ddb69" stroke-width="1.500" stroke-dasharray="2.800 1.600" /><path d="M.5 5h17.500M.5 8.500h17.500M.5 12h17.500M.5 15.500h17.500M5 .8v18M9.300 .8v18M13.600 .8v18" stroke="#bcbcbc" stroke-width=".9"/><rect x="4.800" y=".5" width="4.500" height="18.500" fill="#f5a742" stroke="#e07c12" stroke-width="1"/><path d="M7 2v16" stroke="#fbd28f" stroke-width="1.400" stroke-dasharray="2.500 1.300"/></svg>
<svg class="abs" style="left:629px;top:9px" width="24" height="20" viewBox="0 0 24 20"><path d="M7 1.500v15.500M1.500 11.500L7 17.200l5.500-5.700M16.500 18V2M11 7.500L16.500 1.800 22 7.500" stroke="#2a2a2a" stroke-width="1.700" fill="none" stroke-linejoin="miter"/></svg>
<div class="abs" style="left:660px;top:8.800px;font-size:13px;font-weight:bold;color:#2a2a2a;line-height:14px">A</div>
<svg class="abs" style="left:667px;top:11px" width="14" height="18" viewBox="0 0 14 18"><path d="M6.700 .5v15.500M1.200 10.300l5.500 5.700 5.500-5.700" stroke="#2a2a2a" stroke-width="1.700" fill="none"/></svg>
<div class="abs" style="left:689px;top:14px;font-size:14px;font-weight:bold;color:#2a2a2a;line-height:14px">Z</div>
<svg class="abs" style="left:696px;top:8.5px" width="14" height="18" viewBox="0 0 14 18"><path d="M6.800 17.500V1.800M1.300 7.500L6.800 1.800l5.500 5.700" stroke="#2a2a2a" stroke-width="1.700" fill="none"/></svg>
<svg class="abs" style="left:717px;top:9.5px" width="20" height="19" viewBox="0 0 20 19"><path d="M1 1.200h17l-6.300 7v8.300l-4.200-1.500V8.200z" fill="#f9f9f9" stroke="#b9b9b9" stroke-width="1.100" stroke-linejoin="round"/><path d="M8 1.500l9.800 15.300" stroke="#4a4a4a" stroke-width="2.300" stroke-linecap="round"/><path d="M7.300 .8l2.500 3.800" stroke="#d9d9d9" stroke-width="2.300" stroke-linecap="round"/></svg>
<svg class="abs" style="left:752.5px;top:10px" width="22" height="19" viewBox="0 0 22 19"><rect x=".6" y=".6" width="19" height="16.300" rx="1" fill="#ececec" stroke="#b9b2ac" stroke-width="1"/><rect x="2.200" y="2.200" width="15.800" height="7.500" fill="#3f9be8"/><rect x="2.200" y="6" width="15.800" height="2" fill="#7cc4f2"/><rect x="2.200" y="8.500" width="15.800" height="6.500" fill="#f4a62c"/><path d="M2.200 8.800q3-1.500 6 0t6 0 3.800-.3v1.500H2.200z" fill="#fbe3b0"/><path d="M5.800 9.800l.8 1.700 1.800.2-1.300 1.200.4 1.800-1.700-.9-1.600.9.300-1.800L3.200 11.700l1.800-.2z" fill="#e23a2a"/><path d="M14.500 9.500h3.500v3h3v3.500h-3v3h-3.500v-3h-3v-3.500h3z" fill="#63c13a" stroke="#3f952a" stroke-width=".8"/></svg>
<svg class="abs" style="left:781.5px;top:9.5px" width="20" height="19" viewBox="0 0 20 19"><path d="M.5 18h19" stroke="#c9c9c9" stroke-width="1"/><rect x="1.300" y="6.500" width="5.200" height="11.300" rx="1.400" fill="#86d65a" stroke="#6cc043" stroke-width=".7"/><rect x="7.500" y=".5" width="5" height="17.300" rx="1.400" fill="#b57bea" stroke="#9b5fd6" stroke-width=".7"/><rect x="13.500" y="3.700" width="5.200" height="14.100" rx="1.400" fill="#f2987a" stroke="#e27a5a" stroke-width=".7"/><path d="M3.900 8.500v8M10 2.500v14M16.100 5.700v11" stroke="#fff" stroke-width="1.300" opacity=".45"/></svg>
<svg class="abs" style="left:810.5px;top:9px" width="20" height="19.5" viewBox="0 0 20 19.5"><rect x=".5" y=".5" width="18.500" height="4.300" fill="#78c540" stroke="#5fae2c" stroke-width=".8"/><path d="M1.500 2.600h17" stroke="#a5e074" stroke-width="1.500" stroke-dasharray="2.700 1.800"/><rect x=".6" y="4.800" width="4.500" height="14" fill="#fbfbfb" stroke="#b2b2b2" stroke-width="1"/><path d="M.6 8.300h4.500M.6 11.800h4.500M.6 15.300h4.500" stroke="#b2b2b2" stroke-width="1"/><path d="M6.300 13.300l5.700-4.500v2.500q4 .3 4.200-5.500 4 7.500-4.200 10.200v2.200z" fill="#a774e3" stroke="#8a55cc" stroke-width=".7" stroke-linejoin="round"/></svg>
<div class="abs" style="left:845.500px;top:6.300px;width:20px;text-align:center;font-size:22.500px;font-weight:bold;color:#353535;line-height:28px">&#937;</div>
<svg class="abs" style="left:885px;top:8.5px" width="21" height="21" viewBox="0 0 21 21"><g fill="none" stroke="#7f7f7f" stroke-width="2.600"><rect x="9.800" y="-1.300" width="6" height="10" rx="3" transform="rotate(45 12.800 3.700)"/><rect x="2.300" y="7.300" width="6" height="10" rx="3" transform="rotate(45 5.300 12.300)"/></g><g fill="none" stroke="#e9e9e9" stroke-width=".8"><rect x="9.800" y="-1.300" width="6" height="10" rx="3" transform="rotate(45 12.800 3.700)"/><rect x="2.300" y="7.300" width="6" height="10" rx="3" transform="rotate(45 5.300 12.300)"/></g><path d="M6.500 11.500l5-5.500" stroke="#777" stroke-width="2.400" stroke-linecap="round"/><path d="M6.500 11.500l5-5.500" stroke="#ddd" stroke-width=".8" stroke-linecap="round"/><path d="M13.500 10.800h3.500v3h3v3.500h-3v3h-3.500v-3h-3v-3.500h3z" fill="#63c13a" stroke="#3f952a" stroke-width=".8"/></svg>
<svg class="abs" style="left:912.5px;top:9px" width="23" height="21" viewBox="0 0 23 21"><defs><radialGradient id="bg1" cx="40%" cy="30%" r="70%"><stop offset="0" stop-color="#fde8a6"/><stop offset=".6" stop-color="#f8c24d"/><stop offset="1" stop-color="#eda62e"/></radialGradient></defs><path d="M10.500 .6c5.500 0 9.700 3 9.700 7s-4.200 7-9.700 7q-1.500 0-3-.4L4 18.200l.3-5Q.8 11 .8 7.600C.8 3.600 5 .6 10.500.6z" fill="url(#bg1)" stroke="#e0a238" stroke-width=".8"/><path d="M15 10.300h3.500v3h3v3.500h-3v3H15v-3h-3v-3.500h3z" fill="#63c13a" stroke="#3f952a" stroke-width=".8"/></svg>
<svg class="abs" style="left:945px;top:10px" width="15" height="18" viewBox="0 0 15 18"><rect x=".6" y=".6" width="16" height="17" rx="1" fill="#d6d6d6" stroke="#bdbdbd" stroke-width="1"/><rect x="2.500" y="2.500" width="12" height="2" fill="#c8c8c8"/><rect x="2.500" y="13.500" width="12" height="2" fill="#c8c8c8"/></svg>
<div class="abs" style="left:10px;top:40px;width:126px;height:26px;background:#fff;border:1px solid #c9c9c9;border-radius:4px;box-shadow:inset 0 1px 1px rgba(0,0,0,.04)"></div>
<div class="abs" style="left:112px;top:41px;width:23px;height:24px;background:#f8f8f8;border-left:1px solid #d9d9d9;border-radius:0 3px 3px 0"></div>
<div class="abs" style="left:18.00px;top:45.30px;height:16px;line-height:16px;font-size:12.3px;color:#3b3b3b;white-space:nowrap;transform-origin:0 50%;transform:scaleX(1.0642);-webkit-text-stroke:0.18px #3b3b3b;">DejaVu Serif</div>
<svg class="abs" style="left:119.5px;top:51.199999999999996px" width="9" height="4.2" viewBox="0 0 9 4.2"><path d="M0 0h9L4.5 4.2z" fill="#222"/></svg>
<div class="abs" style="left:143px;top:40px;width:64px;height:26px;background:#fff;border:1px solid #c9c9c9;border-radius:4px;box-shadow:inset 0 1px 1px rgba(0,0,0,.04)"></div>
<div class="abs" style="left:183px;top:41px;width:23px;height:24px;background:#f8f8f8;border-left:1px solid #d9d9d9;border-radius:0 3px 3px 0"></div>
<div class="abs" style="left:151.30px;top:45.30px;height:16px;line-height:16px;font-size:12.3px;color:#3b3b3b;white-space:nowrap;transform-origin:0 50%;transform:scaleX(0.9356);-webkit-text-stroke:0.18px #3b3b3b;">12</div>
<svg class="abs" style="left:190.2px;top:51.199999999999996px" width="9" height="4.2" viewBox="0 0 9 4.2"><path d="M0 0h9L4.5 4.2z" fill="#222"/></svg>
<div class="abs" style="left:210px;top:40px;width:1px;height:26px;background:#dcdcdc"></div>
<div class="abs" style="left:211px;top:40px;width:1px;height:26px;background:#fafafa"></div>
<div class="abs" style="left:0px;top:71px;width:137px;height:25px;background:#fff;border:1px solid #c9c9c9;border-radius:4px;box-shadow:inset 0 1px 1px rgba(0,0,0,.04)"></div>
<div class="abs" style="left:113px;top:72px;width:23px;height:23px;background:#f8f8f8;border-left:1px solid #d9d9d9;border-radius:0 3px 3px 0"></div>
<div class="abs" style="left:7.00px;top:75.80px;height:16px;line-height:16px;font-size:12.3px;color:#3b3b3b;white-space:nowrap;transform-origin:0 50%;transform:scaleX(1.0281);-webkit-text-stroke:0.18px #3b3b3b;">E23</div>
<svg class="abs" style="left:120.5px;top:81.7px" width="9" height="4.2" viewBox="0 0 9 4.2"><path d="M0 0h9L4.5 4.2z" fill="#222"/></svg>
<div class="abs" style="left:141px;top:72px;width:1px;height:23px;background:#dcdcdc"></div>
<div class="abs" style="left:142px;top:72px;width:1px;height:23px;background:#fafafa"></div>
<div class="abs" style="left:148px;top:73px;font-size:17px;font-weight:bold;color:#383838;line-height:20px;letter-spacing:-.3px">f<span style="font-size:13.500px;position:relative;top:1.500px">x</span></div>
<div class="abs" style="left:170.500px;top:73.700px;font-size:15.500px;font-weight:bold;color:#383838;line-height:20px;-webkit-text-stroke:.4px #383838">&#931;</div>
<svg class="abs" style="left:189.8px;top:80.8px" width="5" height="2.8" viewBox="0 0 5 2.8"><path d="M0 0h5L2.5 2.8z" fill="#222"/></svg>
<svg class="abs" style="left:203px;top:78px" width="10" height="10" viewBox="0 0 10 10"><path d="M.5 2.900h8.800M.5 6.900h8.800" stroke="#444" stroke-width="2.300"/></svg>
<div class="abs" style="left:219.500px;top:35px;width:745px;height:392px;background:#f3f3f3;box-shadow:0 1px 3px rgba(0,0,0,.2),-1px 0 3px rgba(0,0,0,.2)"></div>
<div class="abs" style="left:219.500px;top:35px;width:745px;height:22px;background:linear-gradient(#f1f1f1 0%,#ebebeb 60%,#e0e0e0 66%,#dbdbdb 100%);border-top:1px solid #e6e6e6;border-bottom:1px solid #e4e4e4"></div>
<svg class="abs" style="left:224px;top:38px" width="16" height="16" viewBox="0 0 16 16"><defs><radialGradient id="cg" cx="50%" cy="40%" r="60%"><stop offset="0" stop-color="#f2a08c"/><stop offset="1" stop-color="#e07f68"/></radialGradient></defs><circle cx="8" cy="8.200" r="6.300" fill="url(#cg)" stroke="#e3c4bb" stroke-width="1.200"/><path d="M6 6.200l4 4M10 6.200l-4 4" stroke="#9a3323" stroke-width="1.100"/></svg>
<div class="abs" style="left:248.20px;top:38.80px;height:15px;line-height:15px;font-size:11.5px;color:#3c3c3c;white-space:nowrap;transform-origin:0 50%;transform:scaleX(1.0782);font-weight:bold;">Pivot table</div>
<div class="abs" style="left:232.50px;top:61.80px;height:15px;line-height:15px;font-size:11.5px;color:#333;white-space:nowrap;transform-origin:0 50%;transform:scaleX(1.0774);-webkit-text-stroke:0.18px #333;">Layout</div>
<div class="abs" style="left:275px;top:68px;width:554px;height:1px;background:#dfdfdf"></div>
<div class="abs" style="left:275px;top:69px;width:554px;height:1px;background:#fbfbfb"></div>
<div class="box" style="left:270px;top:81px;width:386px;height:71px"></div>
<div class="box" style="left:338px;top:154px;width:318px;height:71px"></div>
<div class="box" style="left:232px;top:227px;width:105px;height:152px"></div>
<div class="box" style="left:338px;top:227px;width:318px;height:152px"></div>
<div class="abs" style="left:431.64px;top:109.20px;height:15px;line-height:15px;font-size:11.5px;color:#333;white-space:nowrap;transform-origin:50% 50%;transform:scaleX(1.0045);-webkit-text-stroke:0.18px #333;"><u>P</u>age Fields</div>
<div class="abs" style="left:459.75px;top:182.30px;height:15px;line-height:15px;font-size:11.5px;color:#333;white-space:nowrap;transform-origin:50% 50%;transform:scaleX(1.0300);-webkit-text-stroke:0.18px #333;">Column <u>F</u>ields</div>
<div class="abs" style="left:272.50px;top:288.50px;height:15px;line-height:15px;font-size:11.5px;color:#333;white-space:nowrap;transform-origin:50% 50%;transform:scaleX(1.0215);-webkit-text-stroke:0.18px #333;"><u>R</u>ow</div>
<div class="abs" style="left:268.66px;top:302.20px;height:15px;line-height:15px;font-size:11.5px;color:#333;white-space:nowrap;transform-origin:50% 50%;transform:scaleX(1.0432);-webkit-text-stroke:0.18px #333;">Fields</div>
<div class="abs" style="left:467.42px;top:295.70px;height:15px;line-height:15px;font-size:11.5px;color:#333;white-space:nowrap;transform-origin:50% 50%;transform:scaleX(1.0316);-webkit-text-stroke:0.18px #333;"><u>D</u>ata Fields</div>
<div class="fld" style="left:235px;top:230px;width:75px;height:19px;"></div>
<div class="abs" style="left:260.25px;top:232.50px;height:15px;line-height:15px;font-size:11.5px;color:#333;white-space:nowrap;transform-origin:50% 50%;transform:scaleX(1.0045);-webkit-text-stroke:0.18px #333;">Date</div>
<div class="fld" style="left:341px;top:230px;width:156px;height:19px;"></div>
<div class="abs" style="left:387.48px;top:232.50px;height:15px;line-height:15px;font-size:11.5px;color:#333;white-space:nowrap;transform-origin:50% 50%;transform:scaleX(0.9691);-webkit-text-stroke:0.18px #333;">Sum - Sales</div>
<div class="fld" style="left:668px;top:84px;width:75px;height:19px;border-top:1px solid #7a7a7a;border-left:1px solid #7a7a7a;box-shadow:inset 1px 1px 0 #9a9a9a"></div>
<div class="abs" style="left:678px;top:86.500px;width:54px;height:14px;border:1px dotted #777"></div>
<div class="abs" style="left:680.99px;top:87.00px;height:15px;line-height:15px;font-size:11.5px;color:#333;white-space:nowrap;transform-origin:50% 50%;transform:scaleX(1.0159);-webkit-text-stroke:0.18px #333;">Company</div>
<div class="fld" style="left:668px;top:105px;width:75px;height:19px;"></div>
<div class="abs" style="left:693.55px;top:107.50px;height:15px;line-height:15px;font-size:11.5px;color:#333;white-space:nowrap;transform-origin:50% 50%;transform:scaleX(1.0127);-webkit-text-stroke:0.18px #333;">Date</div>
<div class="fld" style="left:668px;top:125.5px;width:75px;height:19.0px;"></div>
<div class="abs" style="left:691.12px;top:128.00px;height:15px;line-height:15px;font-size:11.5px;color:#333;white-space:nowrap;transform-origin:50% 50%;transform:scaleX(0.9386);-webkit-text-stroke:0.18px #333;">Sales</div>
<div class="btn" style="left:845px;top:68.5px;width:105px;height:23.0px;background:linear-gradient(#f9b295,#f3946d 50%,#ef865f);border-color:#d08262;border-bottom-color:#bd7152"></div>
<div class="abs" style="left:889.69px;top:72.50px;height:15px;line-height:15px;font-size:11.5px;color:#3a2a22;white-space:nowrap;transform-origin:50% 50%;transform:scaleX(1.0051);-webkit-text-stroke:0.18px #3a2a22;"><u>O</u>K</div>
<div class="btn" style="left:845px;top:98px;width:105px;height:23px;"></div>
<div class="abs" style="left:879.50px;top:101.80px;height:15px;line-height:15px;font-size:11.5px;color:#333;white-space:nowrap;transform-origin:50% 50%;transform:scaleX(1.0252);-webkit-text-stroke:0.18px #333;"><u>C</u>ancel</div>
<div class="btn" style="left:845px;top:132.5px;width:105px;height:23.0px;"></div>
<div class="abs" style="left:885.17px;top:136.20px;height:15px;line-height:15px;font-size:11.5px;color:#333;white-space:nowrap;transform-origin:50% 50%;transform:scaleX(1.0570);-webkit-text-stroke:0.18px #333;"><u>H</u>elp</div>
<div class="btn" style="left:845px;top:167.5px;width:105px;height:23.0px;border-color:#d3d3d3;border-bottom-color:#c4c4c4;background:linear-gradient(#fbfbfb,#f3f3f3 50%,#ebebeb)"></div>
<div class="abs" style="left:876.19px;top:171.50px;height:15px;line-height:15px;font-size:11.5px;color:#525252;white-space:nowrap;transform-origin:50% 50%;-webkit-text-stroke:0.18px #525252;">Remo<u>v</u>e</div>
<div class="btn" style="left:845px;top:197px;width:105px;height:23px;border-color:#d3d3d3;border-bottom-color:#c4c4c4;background:linear-gradient(#fbfbfb,#f3f3f3 50%,#ebebeb)"></div>
<div class="abs" style="left:872.39px;top:201.30px;height:15px;line-height:15px;font-size:11.5px;color:#525252;white-space:nowrap;transform-origin:50% 50%;transform:scaleX(1.0972);-webkit-text-stroke:0.18px #525252;">Options...</div>
<div class="btn" style="left:845px;top:388.5px;width:105px;height:23.0px;"></div>
<div class="abs" style="left:876.90px;top:392.50px;height:15px;line-height:15px;font-size:11.5px;color:#333;white-space:nowrap;transform-origin:50% 50%;transform:scaleX(1.0954);-webkit-text-stroke:0.18px #333;"><u>M</u>ore</div>
<svg class="abs" style="left:910.500px;top:395px" width="8.500" height="8.500" viewBox="0 0 8.500 8.500"><path d="M.3 0h7.900L4.250 3.400zM0 3.500h8.500v.9H0zM.3 4.700h7.900L4.250 8.300z" fill="#222"/></svg>
<div class="abs" style="left:232.50px;top:404.80px;height:15px;line-height:15px;font-size:11.8px;color:#404040;white-space:nowrap;transform-origin:0 50%;transform:scaleX(1.0691);-webkit-text-stroke:0.18px #404040;">Drag the fields into the desired position.</div>
<div class="abs" style="left:696.500px;top:90.500px;width:16px;height:8.500px;border:1.300px solid #2a2a2a;border-radius:2.500px;background:#f8f8f8"></div>
<svg class="abs" style="left:701px;top:93.500px" width="14" height="19" viewBox="0 0 14 19"><path d="M2.600 2v12l2.700-2.600 2.300 5.300 2-.9-2.300-5.100h3.800z" fill="#fdfdfd" stroke="#1c1c1c" stroke-width="1.100" stroke-linejoin="round"/></svg>
</div></body></html>
